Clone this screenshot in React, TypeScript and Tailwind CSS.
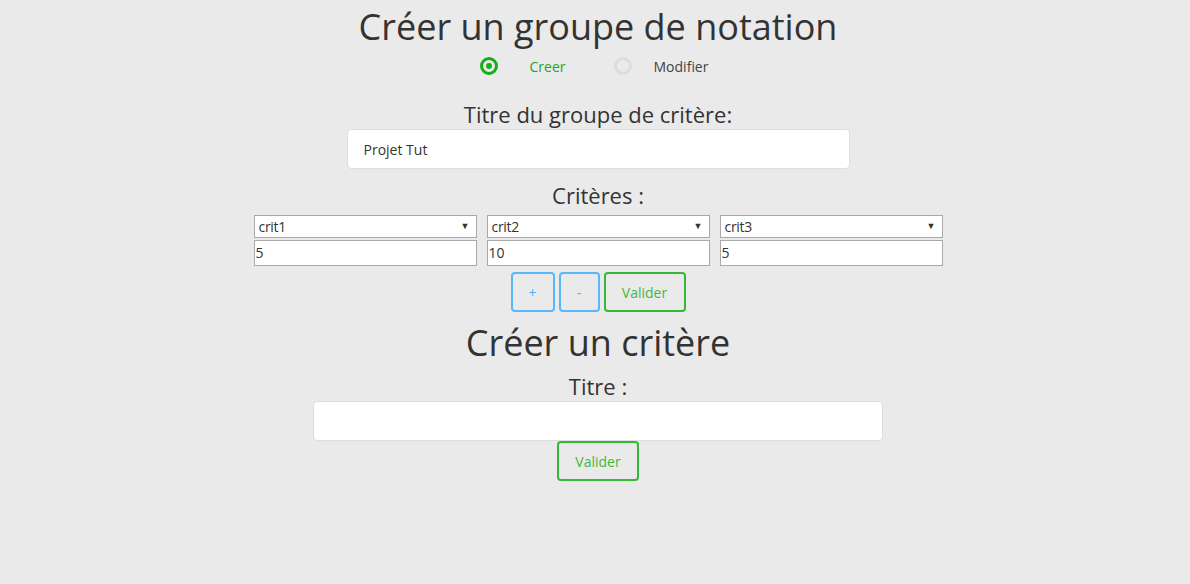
import React from "react";

function Sel({ label }: { label: string }) {
  return (
    <div className="relative flex h-[23px] w-[223px] items-center border border-[#a9a9a9] bg-white pl-[4px] text-[14px] leading-none text-[#333]">
      <span className="tracking-[-0.3px]">{label}</span>
      <span className="absolute right-[6px] top-[5px] text-[9px] text-[#333]">▼</span>
    </div>
  );
}

function Num({ v }: { v: string }) {
  return (
    <div className="flex h-[26px] w-[223px] items-center border border-[#a9a9a9] bg-white pl-[1px] text-[14px] leading-none text-[#333]">
      {v}
    </div>
  );
}

export default function App() {
  return (
    <div
      className="flex min-h-[584px] w-full flex-col items-center bg-[#eaeaea] pl-[6px] text-[#333]"
      style={{ fontFamily: "'Open Sans', 'Noto Sans', sans-serif" }}
    >
      <h1 className="mt-[7px] text-[36px] leading-[40px] text-[#333]">Créer un groupe de notation</h1>
      <div className="ml-[-8px] mt-[9px] flex h-[20px] items-center text-[14px]">
        <span className="flex h-[18px] w-[18px] items-center justify-center rounded-full border-[3px] border-[#1aab1a]">
          <span className="h-[6px] w-[6px] rounded-full bg-[#1aab1a]" />
        </span>
        <span className="ml-[32px] text-[#22a722]">Creer</span>
        <span className="ml-[48px] h-[18px] w-[18px] rounded-full border-[3px] border-[#dcdcdc]" />
        <span className="ml-[22px] text-[#444]">Modifier</span>
      </div>
      <div className="mt-[23px] text-[22px] leading-[30px]">Titre du groupe de critère:</div>
      <div className="flex h-[40px] w-[503px] items-center rounded-[4px] border border-[#dedede] bg-white pl-[16px] text-[14px] text-[#333]">
        Projet Tut
      </div>
      <div className="mt-[11px] text-[22px] leading-[30px]">Critères :</div>
      <div className="mt-[5px] flex gap-[10px]">
        {[
          ["crit1", "5"],
          ["crit2", "10"],
          ["crit3", "5"],
        ].map(([l, v]) => (
          <div key={l} className="flex flex-col gap-[2px]">
            <Sel label={l} />
            <Num v={v} />
          </div>
        ))}
      </div>
      <div className="mt-[6px] flex gap-[4px] text-[14px]">
        <button className="h-[40px] w-[44px] rounded-[4px] border-2 border-[#5ab7fb] text-[#4fb0f5]">+</button>
        <button className="h-[40px] w-[41px] rounded-[4px] border-2 border-[#5ab7fb] text-[#4fb0f5]">-</button>
        <button className="h-[40px] w-[82px] rounded-[4px] border-2 border-[#36b836] text-[#3eb93e]">Valider</button>
      </div>
      <h2 className="mt-[11px] text-[36px] leading-[40px]">Créer un critère</h2>
      <div className="mt-[8px] text-[22px] leading-[30px]">Titre :</div>
      <div className="h-[40px] w-[570px] rounded-[4px] border border-[#dedede] bg-white" />
      <button className="h-[40px] w-[82px] rounded-[4px] border-2 border-[#36b836] text-[14px] text-[#3eb93e]">Valider</button>
    </div>
  );
}
